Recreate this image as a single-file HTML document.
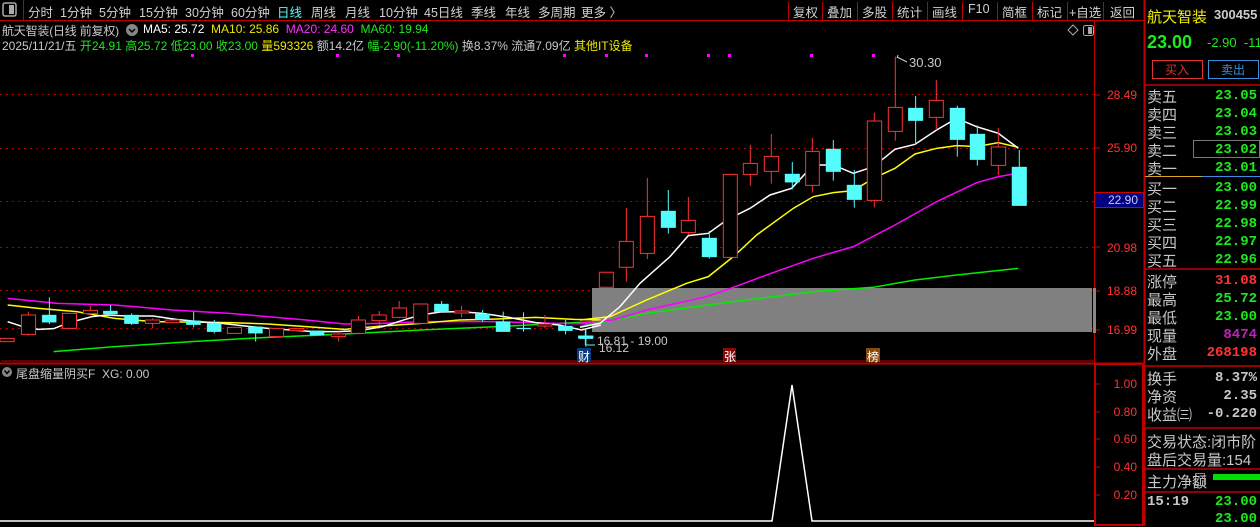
<!DOCTYPE html>
<html><head><meta charset="utf-8"><style>
*{margin:0;padding:0;box-sizing:border-box}
body{width:1260px;height:526px;background:#000;overflow:hidden;position:relative;font-family:"Liberation Sans","Noto Sans CJK SC","WenQuanYi Zen Hei",sans-serif;color:#c8c8c8}
.a{position:absolute;white-space:nowrap}
.tb{font-size:12.5px;top:2px;color:#d0d0d0}
.h{font-size:12px}
.rp{font-size:15px;color:#c8c8c8;left:1147px}
.rv{font-size:14px;font-weight:bold;right:3px;text-align:right;color:#1ee81e;font-family:"Liberation Mono",monospace}
.ax{font-size:12px;color:#ff3232;right:123px;text-align:right}
.g{color:#1ee81e}.y{color:#e8e800}.m{color:#ff32ff}.w{color:#fff}
</style></head><body>
<svg class="a" style="left:0;top:0" width="1260" height="526">
<line x1="0" y1="20.5" x2="1145" y2="20.5" stroke="#c00000"/>
<line x1="23.5" y1="0" x2="23.5" y2="20" stroke="#c00000"/>
<g stroke="#c00000">
<line x1="788.5" y1="2" x2="788.5" y2="20"/><line x1="822.5" y1="2" x2="822.5" y2="20"/><line x1="857.5" y1="2" x2="857.5" y2="20"/><line x1="892.5" y1="2" x2="892.5" y2="20"/><line x1="927.5" y1="2" x2="927.5" y2="20"/><line x1="962.5" y1="2" x2="962.5" y2="20"/><line x1="997.5" y1="2" x2="997.5" y2="20"/><line x1="1032.5" y1="2" x2="1032.5" y2="20"/><line x1="1067.5" y1="2" x2="1067.5" y2="20"/><line x1="1103.5" y1="2" x2="1103.5" y2="20"/>
</g>
<rect x="3" y="3" width="13" height="13" rx="2" fill="none" stroke="#aaa" stroke-width="1.5"/><rect x="9" y="5" width="5" height="9" fill="#aaa"/>
<line x1="1144.5" y1="0" x2="1144.5" y2="526" stroke="#c00000" stroke-width="2"/>
<line x1="1094.5" y1="20" x2="1094.5" y2="526" stroke="#c00000"/>
<line x1="0" y1="363.5" x2="1144" y2="363.5" stroke="#c00000" stroke-width="2"/>
<rect x="1095" y="364" width="48" height="161" fill="none" stroke="#c00000" stroke-width="2"/>
<g stroke="#b00000" stroke-dasharray="2,4">
<line x1="0" y1="94.5" x2="1094" y2="94.5"/><line x1="0" y1="148.5" x2="1094" y2="148.5"/><line x1="0" y1="201.5" x2="1094" y2="201.5"/><line x1="0" y1="247.5" x2="1094" y2="247.5"/><line x1="0" y1="290.5" x2="1094" y2="290.5"/><line x1="0" y1="328.5" x2="1094" y2="328.5"/>
</g>
<g stroke="#c00000"><line x1="1095" y1="95" x2="1100" y2="95"/><line x1="1095" y1="148" x2="1100" y2="148"/><line x1="1095" y1="247" x2="1100" y2="247"/><line x1="1095" y1="291" x2="1100" y2="291"/><line x1="1095" y1="330" x2="1100" y2="330"/>
<line x1="1095" y1="384" x2="1100" y2="384"/><line x1="1095" y1="412" x2="1100" y2="412"/><line x1="1095" y1="439" x2="1100" y2="439"/><line x1="1095" y1="467" x2="1100" y2="467"/><line x1="1095" y1="495" x2="1100" y2="495"/></g>
<rect x="1094.5" y="192.5" width="49" height="15" fill="#000080" stroke="#d00000"/>
<rect x="1093" y="288" width="3" height="45" fill="#888"/>
<rect x="592" y="288" width="500" height="44" fill="#808080"/>
<g fill="#ff00ff"><rect x="191" y="54" width="3" height="3"/><rect x="336" y="54" width="3" height="3"/><rect x="397" y="54" width="3" height="3"/><rect x="563" y="54" width="3" height="3"/><rect x="605" y="54" width="3" height="3"/><rect x="645" y="54" width="3" height="3"/><rect x="707" y="54" width="3" height="3"/><rect x="728" y="54" width="3" height="3"/><rect x="810" y="54" width="3" height="3"/><rect x="872" y="54" width="3" height="3"/></g>
<g transform="translate(0,280) scale(0.3827,0.3333)" fill="none">
<polyline vector-effect="non-scaling-stroke" stroke="#00ee00" stroke-width="1.5" points="140,215 300,200 500,185 700,172 900,162 1100,150 1300,140 1500,128 1570,125"/>
<polyline vector-effect="non-scaling-stroke" stroke="#ff00ff" stroke-width="1.5" points="20,55 150,70 300,75 450,90 600,100 800,120 900,132 1000,130 1100,125 1300,125 1450,130 1570,132"/>
<polyline vector-effect="non-scaling-stroke" stroke="#ffff00" stroke-width="1.5" points="20,75 100,85 200,95 300,115 400,125 600,128 700,132 800,140 900,148 1000,138 1100,130 1200,120 1300,117 1400,112 1500,118 1570,120"/>
<polyline vector-effect="non-scaling-stroke" stroke="#fff" stroke-width="1.5" points="20,125 60,140 100,148 140,146 180,128 240,110 280,105 330,108 400,108 460,118 520,125 580,130 640,138 700,145 760,150 820,155 880,155 940,152 1000,140 1060,118 1100,105 1150,96 1200,95 1260,100 1330,112 1400,128 1460,135 1520,150 1570,135"/>
<g stroke="#ff3232" stroke-width="1" fill="#000">
<path vector-effect="non-scaling-stroke" d="M74 95V167M236 78V105M399 115V145M885 155V185M937 108V163M991 93V135M1043 63V115M1099 70V133M1206 78V112M1424 105V145"/>
<rect vector-effect="non-scaling-stroke" x="0" y="175" width="37" height="10"/><rect vector-effect="non-scaling-stroke" x="56" y="105" width="37" height="58"/><rect vector-effect="non-scaling-stroke" x="163" y="100" width="37" height="45"/><rect vector-effect="non-scaling-stroke" x="218" y="91" width="37" height="10"/><rect vector-effect="non-scaling-stroke" x="380" y="120" width="37" height="10"/><rect vector-effect="non-scaling-stroke" x="432" y="120" width="37" height="8"/><rect vector-effect="non-scaling-stroke" x="594" y="142" width="37" height="18"/><rect vector-effect="non-scaling-stroke" x="704" y="145" width="37" height="25"/><rect vector-effect="non-scaling-stroke" x="757" y="146" width="37" height="6"/><rect vector-effect="non-scaling-stroke" x="866" y="162" width="37" height="8"/><rect vector-effect="non-scaling-stroke" x="918" y="120" width="37" height="40"/><rect vector-effect="non-scaling-stroke" x="972" y="105" width="37" height="17"/><rect vector-effect="non-scaling-stroke" x="1025" y="84" width="37" height="28"/><rect vector-effect="non-scaling-stroke" x="1081" y="72" width="37" height="58"/><rect vector-effect="non-scaling-stroke" x="1188" y="93" width="37" height="6"/><rect vector-effect="non-scaling-stroke" x="1405" y="132" width="37" height="6"/>
</g>
<g stroke="#54fcfc" fill="#54fcfc">
<path vector-effect="non-scaling-stroke" d="M129 52V132M289 75V108M344 100V135M506 96V142M560 120V160M668 140V185M1154 63V97M1261 90V125M1315 95V155M1368 97V155M1478 120V163M1531 150V200"/>
<rect x="110" y="105" width="37" height="22"/><rect x="270" y="93" width="37" height="9"/><rect x="325" y="105" width="37" height="26"/><rect x="487" y="122" width="37" height="12"/><rect x="541" y="130" width="37" height="25"/><rect x="649" y="140" width="37" height="20"/><rect x="810" y="152" width="37" height="14"/><rect x="1135" y="72" width="37" height="23"/><rect x="1242" y="102" width="37" height="16"/><rect x="1296" y="125" width="37" height="30"/><rect x="1350" y="144" width="37" height="3"/><rect x="1459" y="138" width="37" height="14"/><rect x="1512" y="168" width="37" height="8"/>
</g>
</g>
<g transform="translate(580,50) scale(0.3333)" fill="none">
<polyline vector-effect="non-scaling-stroke" stroke="#00ee00" stroke-width="1.5" points="0,830 200,790 460,755 700,725 880,712 1005,690 1130,675 1315,655"/>
<polyline vector-effect="non-scaling-stroke" stroke="#ff00ff" stroke-width="1.5" points="0,820 100,810 200,780 380,740 460,712 560,675 700,625 820,590 945,525 1070,455 1190,398 1255,380 1315,370"/>
<polyline vector-effect="non-scaling-stroke" stroke="#ffff00" stroke-width="1.5" points="0,810 90,800 200,750 320,700 385,680 460,620 530,555 640,475 700,440 760,428 820,422 880,385 945,355 1005,312 1070,295 1130,287 1190,290 1255,278 1315,292"/>
<polyline vector-effect="non-scaling-stroke" stroke="#fff" stroke-width="1.5" points="0,832 60,820 120,770 180,700 270,620 325,557 385,550 440,510 510,475 570,435 635,415 700,345 760,345 820,370 880,350 945,298 1005,283 1070,240 1130,205 1190,230 1255,250 1315,295"/>
<g stroke="#ff3232" fill="#000">
<path vector-effect="non-scaling-stroke" d="M139 474V695M202 384V627M325 441V555M511 285V407M574 252V401M697 264V428M883 188V472M946 20V272M1069 90V240M1255 234V375"/>
<rect vector-effect="non-scaling-stroke" x="58" y="667" width="42" height="45"/><rect vector-effect="non-scaling-stroke" x="118" y="574" width="42" height="78"/><rect vector-effect="non-scaling-stroke" x="181" y="499" width="42" height="111"/><rect vector-effect="non-scaling-stroke" x="304" y="511" width="42" height="37"/><rect vector-effect="non-scaling-stroke" x="430" y="373" width="42" height="249"/><rect vector-effect="non-scaling-stroke" x="490" y="340" width="42" height="33"/><rect vector-effect="non-scaling-stroke" x="553" y="319" width="43" height="45"/><rect vector-effect="non-scaling-stroke" x="677" y="304" width="41" height="102"/><rect vector-effect="non-scaling-stroke" x="862" y="213" width="43" height="238"/><rect vector-effect="non-scaling-stroke" x="925" y="172" width="42" height="72"/><rect vector-effect="non-scaling-stroke" x="1048" y="151" width="42" height="51"/><rect vector-effect="non-scaling-stroke" x="1234" y="291" width="43" height="55"/>
</g>
<g stroke="#54fcfc" fill="#54fcfc">
<path vector-effect="non-scaling-stroke" d="M265 420V551M388 543V626M637 336V418M760 270V392M823 360V473M1007 138V282M1132 167V320M1192 226V347M1318 300V467M16 838V885M16 885H45"/>
<rect x="243" y="483" width="44" height="50"/><rect x="366" y="564" width="44" height="57"/><rect x="615" y="372" width="44" height="25"/><rect x="738" y="297" width="44" height="68"/><rect x="801" y="405" width="44" height="44"/><rect x="985" y="174" width="44" height="38"/><rect x="1110" y="174" width="45" height="95"/><rect x="1170" y="252" width="45" height="77"/><rect x="1296" y="351" width="44" height="116"/><rect x="-5" y="857" width="45" height="8"/>
</g>
</g>
<path d="M897 58l1 -3 M897 57 L907 62" stroke="#ccc" fill="none"/>
<line x1="1.5" y1="361" x2="1094" y2="361" stroke="#c00000"/>
<polyline points="0,521 772,521 792,385 812,521 1094,521" fill="none" stroke="#fff" stroke-width="1.5"/>
<rect x="577" y="348" width="14" height="14" fill="#0a3a7a"/><rect x="723" y="348" width="13" height="14" fill="#8a0a0a"/><rect x="866" y="348" width="14" height="14" fill="#8a4a0a"/>
<circle cx="7" cy="372" r="5" fill="#888"/><path d="M4.5 370.5l2.5 3 2.5-3" stroke="#000" fill="none" stroke-width="1.5"/>
<circle cx="132" cy="30" r="6" fill="#888"/><path d="M129 29l3 3 3-3" stroke="#000" fill="none" stroke-width="1.5"/>
<path d="M1068 30l5-5 5 5-5 5z" fill="none" stroke="#aaa"/>
<rect x="1083.5" y="25.5" width="10" height="10" rx="2" fill="none" stroke="#aaa"/><rect x="1088" y="27" width="4" height="7" fill="#aaa"/>
<rect x="1152.5" y="60.5" width="50" height="18" fill="none" stroke="#e03030"/>
<rect x="1208.5" y="60.5" width="50" height="18" fill="none" stroke="#3c8ce0"/>
<g stroke="#c00000" stroke-width="1.5"><line x1="1145" y1="85" x2="1260" y2="85"/><line x1="1145" y1="269" x2="1260" y2="269"/><line x1="1145" y1="366" x2="1260" y2="366"/><line x1="1145" y1="428" x2="1260" y2="428"/><line x1="1145" y1="469" x2="1260" y2="469"/><line x1="1145" y1="492" x2="1260" y2="492"/></g>
<line x1="1145" y1="176.5" x2="1202" y2="176.5" stroke="#e0a020"/><line x1="1202" y1="176.5" x2="1260" y2="176.5" stroke="#3c8ce0"/>
<rect x="1193.5" y="140.5" width="66" height="17" fill="none" stroke="#777"/>
<rect x="1213" y="474" width="47" height="6" fill="#00e000"/>
<rect x="1195.5" y="473.5" width="9" height="12" fill="none" stroke="#888"/>
</svg>
<div class="a tb" style="left:28px">分时</div><div class="a tb" style="left:60px">1分钟</div><div class="a tb" style="left:99px">5分钟</div><div class="a tb" style="left:139px">15分钟</div><div class="a tb" style="left:185px">30分钟</div><div class="a tb" style="left:231px">60分钟</div><div class="a tb" style="left:277px;color:#54fcfc">日线</div><div class="a tb" style="left:311px">周线</div><div class="a tb" style="left:345px">月线</div><div class="a tb" style="left:379px">10分钟</div><div class="a tb" style="left:424px">45日线</div><div class="a tb" style="left:471px">季线</div><div class="a tb" style="left:505px">年线</div><div class="a tb" style="left:538px">多周期</div><div class="a tb" style="left:581px">更多 〉</div>
<div class="a tb" style="left:793px">复权</div><div class="a tb" style="left:827px">叠加</div><div class="a tb" style="left:862px">多股</div><div class="a tb" style="left:897px">统计</div><div class="a tb" style="left:932px">画线</div><div class="a tb" style="left:968px">F10</div><div class="a tb" style="left:1002px">简框</div><div class="a tb" style="left:1037px">标记</div><div class="a tb" style="left:1069px">+自选</div><div class="a tb" style="left:1110px">返回</div>
<div class="a h" style="left:2px;top:22px;letter-spacing:-0.2px">航天智装(日线 前复权)</div>
<div class="a h" style="left:143px;top:22px"><span class="w">MA5: 25.72</span>&nbsp; <span class="y">MA10: 25.86</span>&nbsp; <span class="m">MA20: 24.60</span>&nbsp; <span class="g">MA60: 19.94</span></div>
<div class="a h" style="left:2px;top:37px">2025/11/21/五 <span class="g">开24.91 高25.72 低23.00 收23.00</span> <span class="y">量593326</span> 额14.2亿 <span class="g">幅-2.90(-11.20%)</span> 换8.37% 流通7.09亿 <span class="y">其他IT设备</span></div>
<div class="a h" style="left:909px;top:55px;font-size:13px">30.30</div>
<div class="a h" style="left:597px;top:334px">16.81 - 19.00</div>
<div class="a h" style="left:599px;top:341px">16.12</div>
<div class="a h w" style="left:578px;top:348px">财</div><div class="a h w" style="left:724px;top:348px">张</div><div class="a h w" style="left:867px;top:348px">榜</div>
<div class="a h" style="left:16px;top:365px">尾盘缩量阴买F&nbsp; XG: 0.00</div>
<div class="a ax" style="top:88px">28.49</div><div class="a ax" style="top:141px">25.90</div><div class="a ax" style="top:193px;right:122px;color:#c8c8ff;font-size:12px">22.90</div><div class="a ax" style="top:241px">20.98</div><div class="a ax" style="top:284px">18.88</div><div class="a ax" style="top:323px">16.99</div>
<div class="a ax" style="top:377px">1.00</div><div class="a ax" style="top:405px">0.80</div><div class="a ax" style="top:432px">0.60</div><div class="a ax" style="top:460px">0.40</div><div class="a ax" style="top:488px">0.20</div>
<div class="a" style="left:1147px;top:6px;font-size:15px;color:#f0f000">航天智装</div>
<div class="a" style="left:1214px;top:7px;font-size:13px;font-weight:bold;color:#ccc">300455</div>
<div class="a" style="left:1147px;top:32px;font-size:18px;font-weight:bold;color:#1ee81e">23.00</div>
<div class="a" style="left:1207px;top:35px;font-size:13px;color:#1ee81e">-2.90&nbsp; -11</div>
<div class="a" style="left:1165px;top:61px;font-size:12px;color:#e03030">买入</div>
<div class="a" style="left:1221px;top:61px;font-size:12px;color:#3c8ce0">卖出</div>
<div class="a rp" style="top:86px">卖五</div><div class="a rv" style="top:88px">23.05</div>
<div class="a rp" style="top:104px">卖四</div><div class="a rv" style="top:106px">23.04</div>
<div class="a rp" style="top:122px">卖三</div><div class="a rv" style="top:124px">23.03</div>
<div class="a rp" style="top:140px">卖二</div><div class="a rv" style="top:142px">23.02</div>
<div class="a rp" style="top:158px">卖一</div><div class="a rv" style="top:160px">23.01</div>
<div class="a rp" style="top:178px">买一</div><div class="a rv" style="top:180px">23.00</div>
<div class="a rp" style="top:196px">买二</div><div class="a rv" style="top:198px">22.99</div>
<div class="a rp" style="top:214px">买三</div><div class="a rv" style="top:216px">22.98</div>
<div class="a rp" style="top:232px">买四</div><div class="a rv" style="top:234px">22.97</div>
<div class="a rp" style="top:250px">买五</div><div class="a rv" style="top:252px">22.96</div>
<div class="a rp" style="top:271px">涨停</div><div class="a rv" style="top:273px;color:#ff3232">31.08</div>
<div class="a rp" style="top:289px">最高</div><div class="a rv" style="top:291px">25.72</div>
<div class="a rp" style="top:307px">最低</div><div class="a rv" style="top:309px">23.00</div>
<div class="a rp" style="top:325px">现量</div><div class="a rv" style="top:327px;color:#c020c0">8474</div>
<div class="a rp" style="top:343px">外盘</div><div class="a rv" style="top:345px;color:#ff3232">268198</div>
<div class="a rp" style="top:368px">换手</div><div class="a rv" style="top:370px;color:#c8c8c8">8.37%</div>
<div class="a rp" style="top:386px">净资</div><div class="a rv" style="top:388px;color:#c8c8c8">2.35</div>
<div class="a rp" style="top:404px">收益㈢</div><div class="a rv" style="top:406px;color:#c8c8c8">-0.220</div>
<div class="a rp" style="top:431px">交易状态:闭市阶</div>
<div class="a rp" style="top:449px">盘后交易量:154</div>
<div class="a rp" style="top:471px">主力净额</div>
<div class="a rv" style="top:494px;left:1147px;right:auto;color:#c8c8c8">15:19</div><div class="a rv" style="top:494px">23.00</div>
<div class="a rv" style="top:511px">23.00</div>
</body></html>
